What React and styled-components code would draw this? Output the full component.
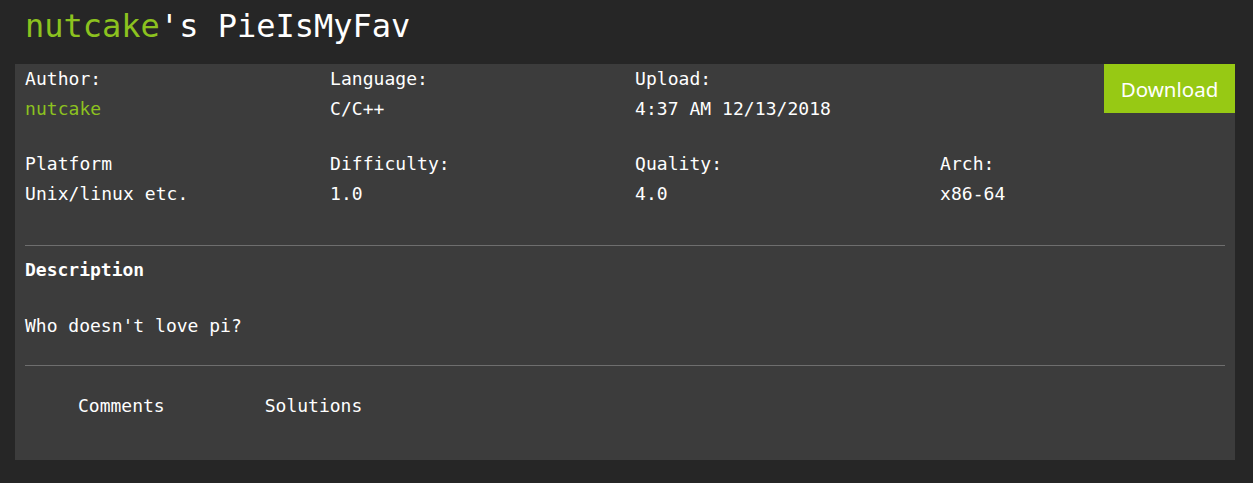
import React from "react";
import styled, { createGlobalStyle } from "styled-components";

const GlobalStyle = createGlobalStyle`
  body {
    margin: 0;
    background: #262626;
    color: #ffffff;
    font-family: "DejaVu Sans Mono", "Liberation Mono", monospace;
  }
`;

const Page = styled.div`
  padding: 0 18px 23px 15px;
`;

const Title = styled.h1`
  margin: 0;
  padding: 0 10px;
  height: 64px;
  line-height: 52px;
  font-size: 32px;
  font-weight: normal;
  color: #ffffff;
`;

const Accent = styled.span`
  color: #8cc21f;
`;

const Panel = styled.div`
  background: #3c3c3c;
  padding-bottom: 39px;
`;

const InfoRow = styled.div`
  display: grid;
  grid-template-columns: repeat(4, 1fr);
  margin-bottom: ${(p) => p.$gap || 0}px;
`;

const Field = styled.div`
  padding: 0 10px;
  font-size: 18px;
  line-height: 30px;
  letter-spacing: 0.05px;
`;

const Label = styled.div``;

const Value = styled.div`
  color: ${(p) => (p.$accent ? "#8cc21f" : "#ffffff")};
`;

const DownloadButton = styled.button`
  justify-self: end;
  align-self: start;
  width: 131px;
  height: 49px;
  border: none;
  background: #97c914;
  color: #ffffff;
  font-family: "Noto Sans", "Open Sans", sans-serif;
  font-size: 20.5px;
  cursor: pointer;
`;

const Divider = styled.hr`
  margin: 0 10px;
  border: none;
  border-top: 1px solid #6e6e6e;
`;

const Section = styled.div`
  padding: 9px 10px 24px;
  font-size: 18px;
  line-height: 30px;
`;

const SectionTitle = styled.div`
  font-weight: bold;
  margin-bottom: 26px;
`;

const Text = styled.div``;

const Tabs = styled.div`
  display: flex;
  padding: 25px 0 0 13px;
`;

const Tab = styled.div`
  padding: 0 50px;
  font-size: 18px;
  line-height: 30px;
  cursor: pointer;
`;

export default function App() {
  return (
    <>
      <GlobalStyle />
      <Page>
        <Title>
          <Accent>nutcake</Accent>'s PieIsMyFav
        </Title>
        <Panel>
          <InfoRow $gap={25}>
            <Field>
              <Label>Author:</Label>
              <Value $accent>nutcake</Value>
            </Field>
            <Field>
              <Label>Language:</Label>
              <Value>C/C++</Value>
            </Field>
            <Field>
              <Label>Upload:</Label>
              <Value>4:37 AM 12/13/2018</Value>
            </Field>
            <DownloadButton>Download</DownloadButton>
          </InfoRow>
          <InfoRow $gap={36}>
            <Field>
              <Label>Platform</Label>
              <Value>Unix/linux etc.</Value>
            </Field>
            <Field>
              <Label>Difficulty:</Label>
              <Value>1.0</Value>
            </Field>
            <Field>
              <Label>Quality:</Label>
              <Value>4.0</Value>
            </Field>
            <Field>
              <Label>Arch:</Label>
              <Value>x86-64</Value>
            </Field>
          </InfoRow>
          <Divider />
          <Section>
            <SectionTitle>Description</SectionTitle>
            <Text>Who doesn't love pi?</Text>
          </Section>
          <Divider />
          <Tabs>
            <Tab>Comments</Tab>
            <Tab>Solutions</Tab>
          </Tabs>
        </Panel>
      </Page>
    </>
  );
}
